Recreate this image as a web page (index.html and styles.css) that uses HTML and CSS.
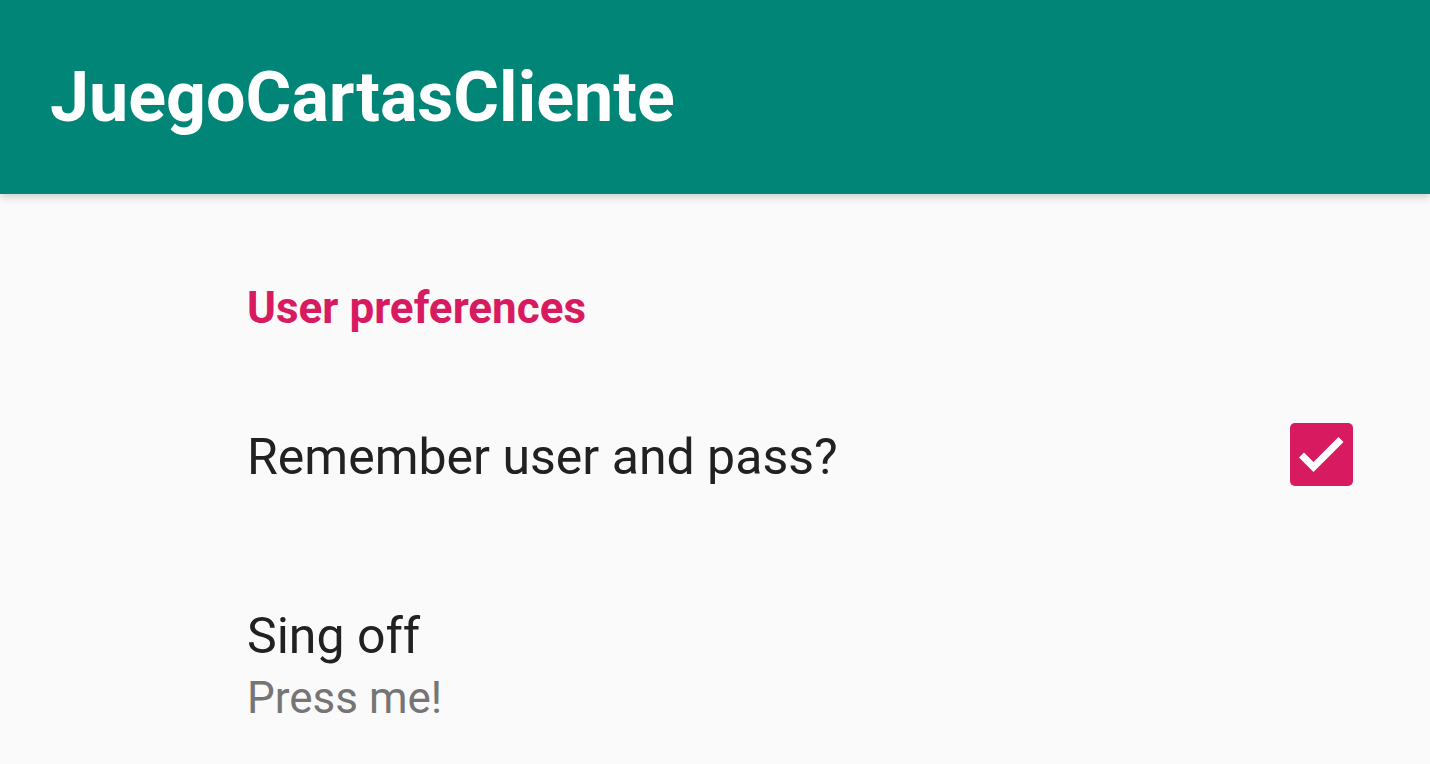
FILE: index.html
```html
<!DOCTYPE html>
<html>
<head>
<meta charset="utf-8">
<link rel="stylesheet" href="styles.css">
</head>
<body>
<header class="appbar">
  <h1 class="title">JuegoCartasCliente</h1>
</header>
<main class="prefs">
  <div class="category">User preferences</div>
  <div class="pref pref-check">
    <div class="pref-title">Remember user and pass?</div>
    <div class="checkbox">
      <svg viewBox="0 0 63 63" width="63" height="63">
        <rect x="0" y="0" width="63" height="63" rx="5" fill="#D81B60"/>
        <path d="M11.5 32 L23.5 44 L51 16.5" fill="none" stroke="#fff" stroke-width="7"/>
      </svg>
    </div>
  </div>
  <div class="pref pref-text">
    <div class="pref-title">Sing off</div>
    <div class="pref-summary">Press me!</div>
  </div>
</main>
</body>
</html>
```
FILE: styles.css
```css
html, body {
  margin: 0;
  padding: 0;
  background: #FAFAFA;
  font-family: Roboto, "Noto Sans", sans-serif;
  height: 100%;
  overflow: hidden;
}
.appbar {
  height: 194px;
  background: #008577;
  display: flex;
  align-items: center;
  padding-left: 50px;
  box-shadow: 0 3px 8px rgba(0,0,0,0.18);
  position: relative;
  z-index: 1;
}
.title {
  margin: 0;
  color: #fff;
  font-weight: 700;
  font-size: 70px;
}
.prefs {
  padding-left: 247px;
  padding-right: 77px;
}
.category {
  color: #D81B60;
  font-weight: 700;
  font-size: 44px;
  line-height: 50px;
  padding-top: 89px;
}
.pref-check {
  display: flex;
  align-items: center;
  justify-content: space-between;
  padding-top: 90px;
}
.pref-title {
  color: #212121;
  font-size: 50px;
  line-height: 58px;
}
.checkbox {
  display: flex;
  margin-bottom: 4px;
}
.pref-text {
  padding-top: 117px;
}
.pref-summary {
  color: #757575;
  font-size: 44px;
  line-height: 50px;
  margin-top: 8px;
}
```
